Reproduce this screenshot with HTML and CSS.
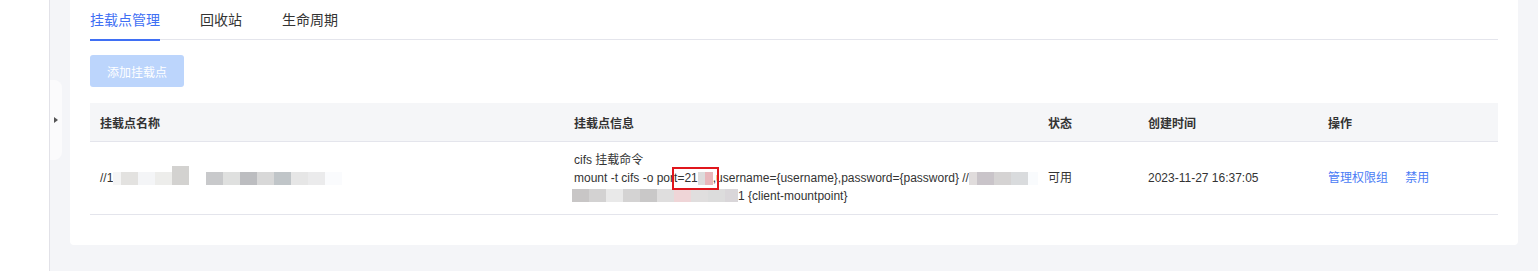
FILE: index.html
```html
<!DOCTYPE html>
<html lang="zh-CN">
<head>
  <meta charset="UTF-8">
  <title>挂载点管理</title>
  <link rel="stylesheet" href="styles.css">
</head>
<body>
  <div class="sidebar"></div>

  <div class="main">
    <div class="collapse"><span class="arrow"></span></div>

    <div class="card">
      <div class="tabs">
        <div class="tab active">挂载点管理</div>
        <div class="tab">回收站</div>
        <div class="tab">生命周期</div>
      </div>

      <button class="btn" disabled>添加挂载点</button>

      <table class="grid">
        <colgroup>
          <col style="width: 474px">
          <col style="width: 474px">
          <col style="width: 100px">
          <col style="width: 180px">
          <col style="width: 180px">
        </colgroup>
        <thead>
          <tr>
            <th>挂载点名称</th>
            <th>挂载点信息</th>
            <th>状态</th>
            <th>创建时间</th>
            <th>操作</th>
          </tr>
        </thead>
        <tbody>
          <tr>
            <td>
              <div class="line">//1<span class="mosaic"><i class="half" style="background:#f5f5f5"></i><i style="background:#e3e2e0"></i><i style="background:#f4f5f7"></i><i style="background:#ededeb"></i><i class="tall" style="background:#d3d2d0"></i><i style="background:#fff"></i><i style="background:#c8c9cb"></i><i style="background:#dfe0df"></i><i style="background:#bcbdc0"></i><i style="background:#d8d8d8"></i><i style="background:#c0c5c8"></i><i style="background:#e6e6e6"></i><i style="background:#ebebec"></i><i style="background:#fafbfd"></i></span></div>
            </td>
            <td class="info">
              <div class="line">cifs 挂载命令</div>
              <div class="line">mount -t cifs -o po<span class="mark">rt=21<span class="mosaic"><i class="half" style="width:7px;background:#dcdcdc"></i><i class="half" style="background:#e8b7bb"></i></span></span>,username={username},password={password} //<span class="mosaic"><i class="half" style="background:#e0dcdc"></i><i style="background:#c9c4c9"></i><i style="background:#d5d3d3"></i><i style="background:#d9dbdd"></i><i style="background:#f9fbfd"></i></span></div>
              <div class="line"><span class="mosaic low"><i style="background:#c8c6c6"></i><i style="background:#d3d2d2"></i><i style="background:#e9e9e9"></i><i style="background:#d4d3d3"></i><i style="background:#c9c8c8"></i><i style="background:#dfdede"></i><i style="background:#efd5d7"></i><i style="background:#e0dede"></i><i style="background:#dcdcdc"></i><i style="width:13px;background:#d9d6d9"></i></span>1 {client-mountpoint}</div>
            </td>
            <td>可用</td>
            <td>2023-11-27 16:37:05</td>
            <td>
              <a class="link" href="#">管理权限组</a>
              <a class="link" href="#">禁用</a>
            </td>
          </tr>
        </tbody>
      </table>
    </div>
  </div>
</body>
</html>
```

FILE: styles.css
```css
body {
  margin: 0;
  height: 271px;
  display: flex;
  font-family: "Liberation Sans", "Noto Sans CJK SC", sans-serif;
  color: #333;
  background: #f4f5f8;
  overflow: hidden;
}

.sidebar {
  width: 49px;
  flex: none;
  background: #fff;
  border-right: 1px solid #e2e2e8;
}

.main {
  position: relative;
  flex: 1;
  padding: 0 20px;
}

.collapse {
  position: absolute;
  left: 0;
  top: 80px;
  width: 12px;
  height: 80px;
  background: #fbfbfc;
  border-radius: 0 8px 8px 0;
}

.arrow {
  position: absolute;
  left: 4px;
  top: 37px;
  width: 0;
  height: 0;
  border-top: 3px solid transparent;
  border-bottom: 3px solid transparent;
  border-left: 4px solid #555;
}

.card {
  background: #fff;
  border-radius: 0 0 4px 4px;
  padding: 0 20px 30px;
}

.tabs {
  display: flex;
  gap: 40px;
  border-bottom: 1px solid #e4e5ec;
}

.tab {
  position: relative;
  padding: 9px 0 8px;
  font-size: 14px;
  line-height: 22px;
  color: #333;
}

.tab.active {
  color: #3f6ff4;
}

.tab.active::after {
  content: "";
  position: absolute;
  left: 0;
  right: 0;
  bottom: -2px;
  height: 2px;
  background: #3f6ff4;
}

.btn {
  display: block;
  margin-top: 15px;
  width: 94px;
  height: 32px;
  border: none;
  border-radius: 3px;
  background: #bcd5fc;
  color: #fff;
  font-family: inherit;
  font-size: 12px;
  padding: 0;
}

.grid {
  margin-top: 16px;
  width: 100%;
  table-layout: fixed;
  border-collapse: collapse;
  font-size: 12px;
}

.grid th {
  height: 38px;
  padding: 0 10px;
  background: #f5f6f8;
  text-align: left;
  font-weight: bold;
  color: #333;
  border-bottom: 1px solid #e4e5ec;
}

.grid td {
  padding: 9px 10px;
  line-height: 18px;
  vertical-align: middle;
  border-bottom: 1px solid #e4e5ec;
  white-space: nowrap;
  overflow: hidden;
}

.line {
  height: 18px;
  white-space: nowrap;
}

.mosaic {
  display: inline-flex;
  vertical-align: -3px;
}

.mosaic i {
  display: block;
  width: 17px;
  height: 13px;
}

.mosaic i.half {
  width: 8px;
}

.mosaic i.tall {
  margin-top: -6px;
  height: 19px;
}

.mosaic.low {
  vertical-align: -2px;
  margin-left: -2px;
}

.mark {
  position: relative;
}

.mark::after {
  content: "";
  position: absolute;
  left: 2px;
  right: -6px;
  top: -4px;
  bottom: -5px;
  border: 2px solid #e0161c;
}

.link {
  color: #4a7cf5;
  text-decoration: none;
  margin-right: 14px;
}
```
